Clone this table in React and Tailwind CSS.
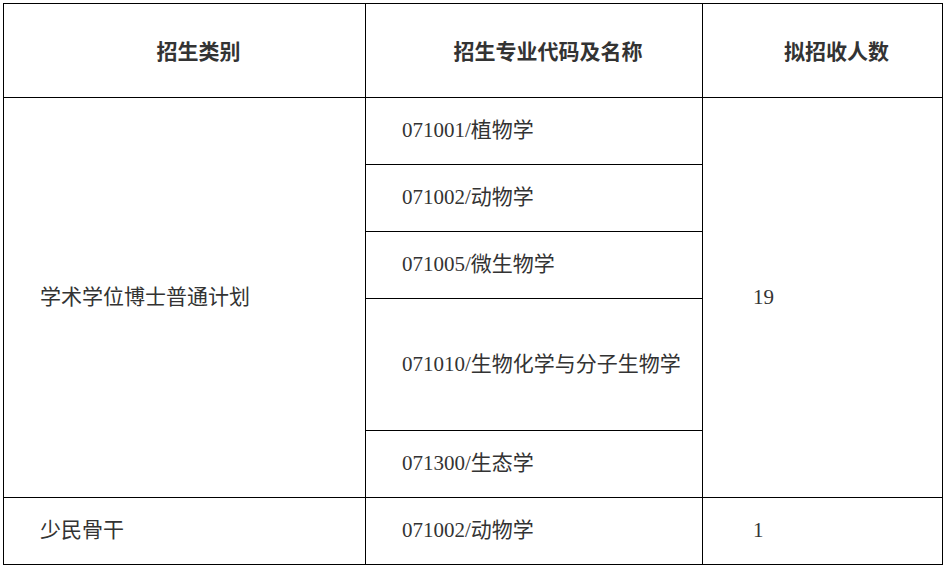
export default function App() {
  const cell = "border-r border-b border-black flex items-center";
  const body = "text-[21px] text-[#333] pl-[36px]";
  const head = "justify-center pl-[28px] font-['Noto_Sans_CJK_SC',sans-serif] font-bold text-[21px] text-[#333]";
  return (
    <div className="w-[947px] h-[569px] bg-white pt-[3px] pl-[3px]">
      <div className="grid grid-cols-[362px_337px_240px] grid-rows-[94px_67px_67px_67px_132px_67px_67px] border-l border-t border-black w-fit font-['Liberation_Serif','Noto_Sans_CJK_SC',serif]">
        <div className={`${cell} ${head}`}>招生类别</div>
        <div className={`${cell} ${head}`}>招生专业代码及名称</div>
        <div className={`${cell} ${head}`}>拟招收人数</div>

        <div className={`${cell} ${body} row-span-5`}>学术学位博士普通计划</div>
        <div className={`${cell} ${body}`}>071001/植物学</div>
        <div className={`${cell} ${body} row-span-5 pl-[50px]`}>19</div>
        <div className={`${cell} ${body}`}>071002/动物学</div>
        <div className={`${cell} ${body}`}>071005/微生物学</div>
        <div className={`${cell} ${body}`}>071010/生物化学与分子生物学</div>
        <div className={`${cell} ${body}`}>071300/生态学</div>

        <div className={`${cell} ${body}`}>少民骨干</div>
        <div className={`${cell} ${body}`}>071002/动物学</div>
        <div className={`${cell} ${body} pl-[50px]`}>1</div>
      </div>
    </div>
  );
}
